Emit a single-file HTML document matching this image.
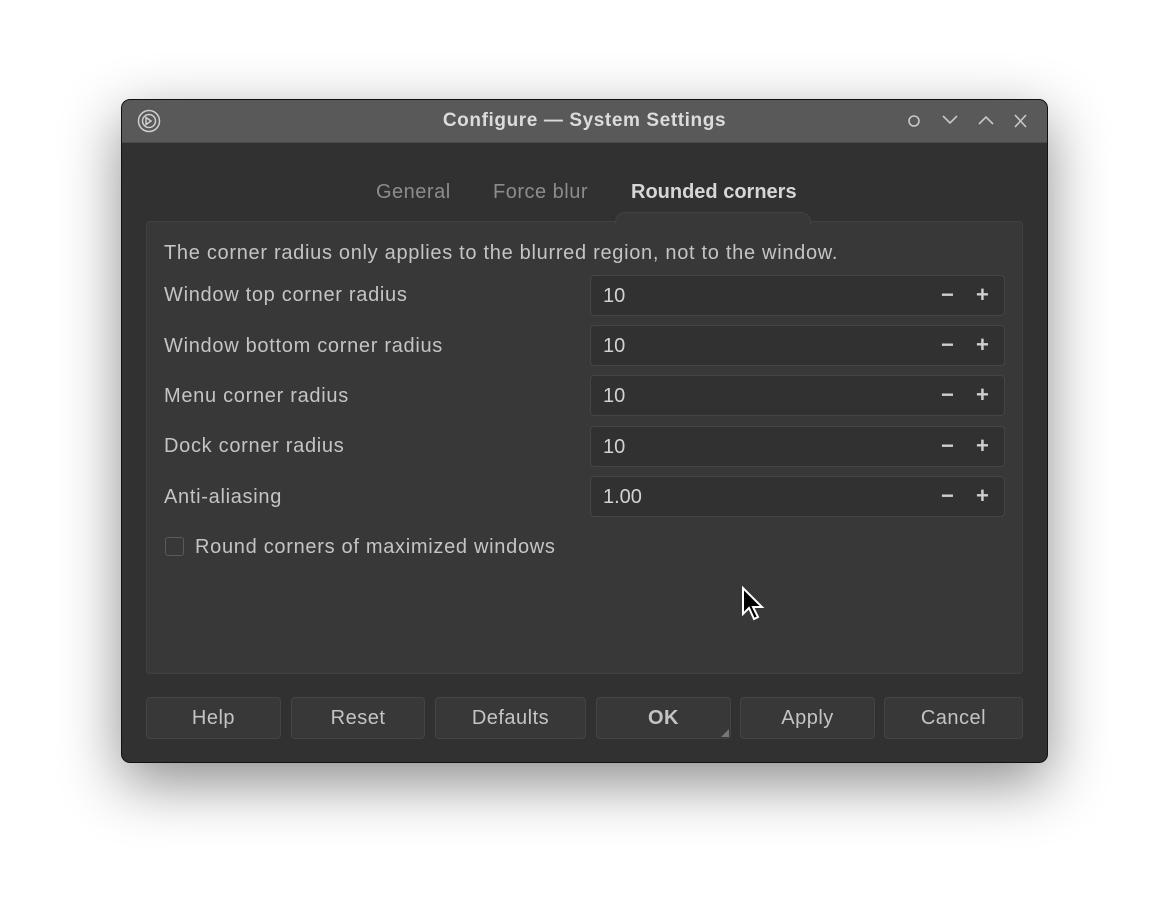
<!DOCTYPE html>
<html><head><style>
*{box-sizing:border-box;margin:0;padding:0}
body{width:1169px;height:907px;background:#fff;position:relative;overflow:hidden;font-family:"Liberation Sans",sans-serif;}
.win{position:absolute;left:121px;top:99px;width:927px;height:664px;background:#313131;border:1px solid #111;border-radius:9px;box-shadow:0 20px 60px rgba(0,0,0,.45);overflow:hidden}
.tb{position:absolute;left:0;top:0;right:0;height:43px;background:#595959;border-bottom:1px solid #4a4a4a}
.title{position:absolute;left:0;right:0;top:10px;text-align:center;color:#dcdcdc;font-weight:bold;font-size:19px;letter-spacing:.6px}
.t{position:absolute;font-size:20px;color:#c4c4c4;letter-spacing:.7px}
.tab{position:absolute;top:81px;font-size:20px;color:#8c8c8c;letter-spacing:.5px}
.panel{position:absolute;left:24px;top:121px;width:877px;height:453px;background:#383838;border:1px solid #414141;border-radius:4px}
.bump{position:absolute;left:493px;top:112px;width:196px;height:12px;background:#383838;border:1px solid #414141;border-bottom:none;border-radius:10px 10px 0 0}
.spin{position:absolute;left:468px;width:415px;height:41px;background:#313131;border:1px solid #454545;border-radius:4px}
.spin span{position:absolute;left:12px;top:9px;font-size:20px;color:#d2d2d2}
.spin b{position:absolute;top:6px;font-size:22px;color:#cfcfcf}
.btn{position:absolute;top:597px;height:42px;background:#383838;border:1px solid #444;border-radius:4px;color:#c4c4c4;font-size:20px;letter-spacing:.5px;text-align:center;line-height:40px}
</style></head><body>
<div class="win">
<div class="tb">
<svg style="position:absolute;left:15px;top:9px" width="24" height="24" viewBox="0 0 24 24" fill="none" stroke="#cfcfcf" stroke-width="1.5"><circle cx="12" cy="12" r="10.5"/><circle cx="12" cy="12" r="6.5"/><path d="M9 8.5l5 3.5-5 3.5z"/></svg>
<div class="title">Configure — System Settings</div>
<svg style="position:absolute;left:780px;top:11px" width="130" height="22" fill="none" stroke="#c8c8c8" stroke-width="1.6"><circle cx="12" cy="10" r="5"/><path d="M41 5l7 7 7-7M77 13l7-7 7 7M113 4l11 12M124 4l-11 12"/></svg>
</div>
<div class="panel"></div>
<div class="bump"></div>
<div class="tab" style="left:254px">General</div>
<div class="tab" style="left:371px">Force blur</div>
<div class="tab" style="left:509px;color:#d6d6d6;font-weight:bold;letter-spacing:0">Rounded corners</div>
<div class="t" style="left:42px;top:142px">The corner radius only applies to the blurred region, not to the window.</div>
<div class="t" style="left:42px;top:184px">Window top corner radius</div>
<div class="t" style="left:42px;top:235px">Window bottom corner radius</div>
<div class="t" style="left:42px;top:285px">Menu corner radius</div>
<div class="t" style="left:42px;top:335px">Dock corner radius</div>
<div class="t" style="left:42px;top:386px">Anti-aliasing</div>
<div class="spin" style="top:175px"><span>10</span><b style="left:350px">−</b><b style="left:385px">+</b></div>
<div class="spin" style="top:225px"><span>10</span><b style="left:350px">−</b><b style="left:385px">+</b></div>
<div class="spin" style="top:275px"><span>10</span><b style="left:350px">−</b><b style="left:385px">+</b></div>
<div class="spin" style="top:326px"><span>10</span><b style="left:350px">−</b><b style="left:385px">+</b></div>
<div class="spin" style="top:376px"><span>1.00</span><b style="left:350px">−</b><b style="left:385px">+</b></div>
<div style="position:absolute;left:43px;top:437px;width:19px;height:19px;border:1.5px solid #5a5a5a;border-radius:3px"></div>
<div class="t" style="left:73px;top:436px">Round corners of maximized windows</div>
<div class="btn" style="left:24px;width:135px">Help</div>
<div class="btn" style="left:169px;width:134px">Reset</div>
<div class="btn" style="left:313px;width:151px">Defaults</div>
<div class="btn" style="left:474px;width:135px;font-weight:bold">OK<div style="position:absolute;right:1px;bottom:1px;width:0;height:0;border-left:8px solid transparent;border-bottom:8px solid #777"></div></div>
<div class="btn" style="left:618px;width:135px">Apply</div>
<div class="btn" style="left:762px;width:139px">Cancel</div>
<svg style="position:absolute;left:619px;top:486px" width="26" height="38" viewBox="0 0 26 38"><path d="M2 2v26l6-6 5 11 4-2-5-10h9z" fill="#000" stroke="#fff" stroke-width="2"/></svg>
</div>
</body></html>
